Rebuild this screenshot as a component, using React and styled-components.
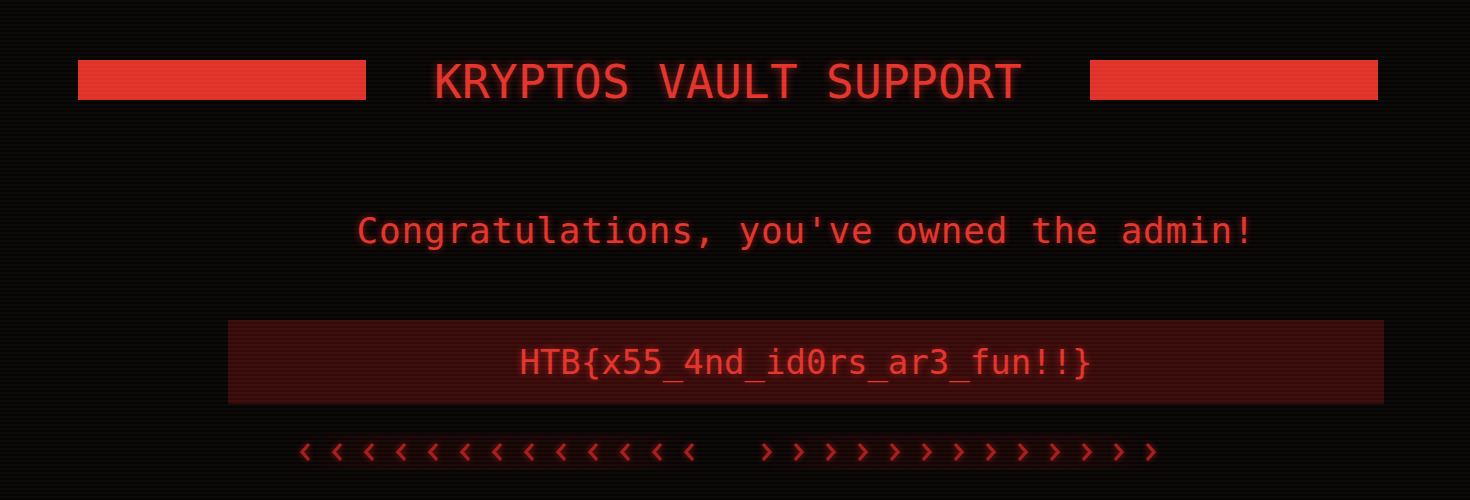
import React from 'react';
import styled, { createGlobalStyle } from 'styled-components';

const GlobalStyle = createGlobalStyle`
  html, body {
    margin: 0;
    padding: 0;
    background: #070404;
    font-family: 'DejaVu Sans Mono', 'Liberation Mono', monospace;
  }

  /* CRT scanlines over the whole screen */
  body::after {
    content: '';
    position: fixed;
    inset: 0;
    pointer-events: none;
    background: repeating-linear-gradient(
      to bottom,
      rgba(255, 240, 240, 0.03) 0px,
      rgba(255, 240, 240, 0.03) 2px,
      transparent 2px,
      transparent 4px
    );
  }
`;

const Screen = styled.div`
  width: 1470px;
  height: 500px;
  overflow: hidden;
  display: flex;
  flex-direction: column;
`;

const Header = styled.header`
  margin: 60px 0 0 78px;
  width: 1300px;
  height: 40px;
  display: grid;
  grid-template-columns: 288px 1fr 288px;
  grid-template-rows: 40px;
  align-items: start;
`;

const Bar = styled.div`
  height: 40px;
  background: #e03228;
`;

const Title = styled.h1`
  margin: 2px 0 0;
  text-align: center;
  font-size: 46px;
  line-height: 40px;
  font-weight: 400;
  letter-spacing: 0.3px;
  white-space: nowrap;
  color: #e3332a;
  text-shadow: 0 0 8px rgba(227, 51, 42, 0.55);
`;

const Content = styled.main`
  margin-left: 228px;
  width: 1156px;
  display: flex;
  flex-direction: column;
`;

const Message = styled.p`
  margin: 106px 0 0;
  height: 50px;
  display: flex;
  align-items: center;
  justify-content: center;
  font-size: 36px;
  line-height: 1;
  letter-spacing: 0.8px;
  color: #e3332a;
  text-shadow: 0 0 7px rgba(227, 51, 42, 0.55);
`;

const FlagBox = styled.div`
  margin-top: 64px;
  height: 84px;
  display: flex;
  align-items: center;
  justify-content: center;
  background: #360909;
`;

const Flag = styled.code`
  font-family: 'DejaVu Sans Mono', 'Liberation Mono', monospace;
  font-size: 34px;
  line-height: 1;
  color: #e3332a;
  text-shadow: 0 0 7px rgba(227, 51, 42, 0.6);
`;

const ArrowRow = styled.div`
  margin: 30px 0 0 78px;
  width: 1300px;
  height: 36px;
  display: flex;
  justify-content: center;
  align-items: center;
  gap: 66px;
`;

const ArrowGroup = styled.div`
  display: flex;
  align-items: center;
  gap: 20px;
  padding: 8px 0;
  background: linear-gradient(
    to right,
    rgba(90, 8, 8, 0) 0%,
    rgba(90, 8, 8, 0.18) 20%,
    rgba(90, 8, 8, 0.18) 80%,
    rgba(90, 8, 8, 0) 100%
  );

  svg {
    display: block;
    filter: drop-shadow(0 0 3px rgba(180, 30, 26, 0.6));
  }
`;

const Chevron = ({ dir }) => (
  <svg width="12" height="20" viewBox="0 0 12 20">
    <polyline
      points={dir === 'left' ? '10,2 3,10 10,18' : '2,2 9,10 2,18'}
      fill="none"
      stroke="#a51c18"
      strokeWidth="3.4"
    />
  </svg>
);

const arrows = Array.from({ length: 13 });

export default function App() {
  return (
    <>
      <GlobalStyle />
      <Screen>
        <Header>
          <Bar />
          <Title>KRYPTOS VAULT SUPPORT</Title>
          <Bar />
        </Header>
        <Content>
          <Message>Congratulations, you've owned the admin!</Message>
          <FlagBox>
            <Flag>HTB{'{'}x55_4nd_id0rs_ar3_fun!!{'}'}</Flag>
          </FlagBox>
        </Content>
        <ArrowRow>
          <ArrowGroup>
            {arrows.map((_, i) => <Chevron key={i} dir="left" />)}
          </ArrowGroup>
          <ArrowGroup>
            {arrows.map((_, i) => <Chevron key={i} dir="right" />)}
          </ArrowGroup>
        </ArrowRow>
      </Screen>
    </>
  );
}
